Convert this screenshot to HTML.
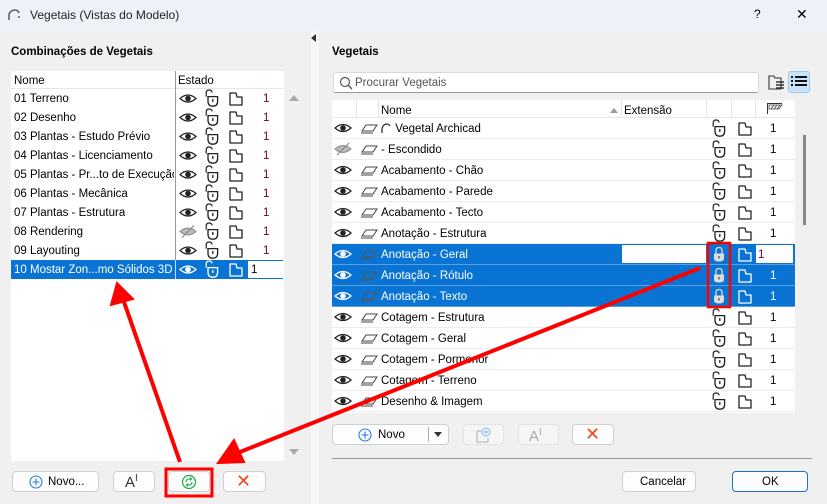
<!DOCTYPE html>
<html><head><meta charset="utf-8"><style>
*{margin:0;padding:0;box-sizing:border-box}
body{width:827px;height:504px;overflow:hidden;background:#f0f0f0;font-family:"Liberation Sans",sans-serif;font-size:11.5px;color:#000;position:relative}
.a{position:absolute}
.t{position:absolute;white-space:nowrap}
.btn{position:absolute;background:#fdfdfd;border:1px solid #d0d0d0;border-radius:4px}
.sel{background:#0a74d4;color:#fff}
svg{position:absolute;overflow:visible}
</style></head><body>
<svg width="0" height="0" style="position:absolute">
<defs>
<g id="eye"><path d="M-8 0 Q0 -7 8 0 Q0 7 -8 0Z" fill="none" stroke="currentColor" stroke-width="1.3"/><circle r="2.8" fill="currentColor"/></g>
<g id="eyeoff"><path d="M-8 0 Q0 -7 8 0 Q0 7 -8 0Z" fill="#bbb" stroke="#888" stroke-width="1"/><path d="M-6 6 L6 -6" stroke="#888" stroke-width="1.2"/></g>
<g id="lock" transform="scale(1.2)"><path d="M-4 -2 V-5 Q-4 -7.5 -1.5 -7.5 Q0.5 -7.5 1 -5.5" fill="none" stroke="currentColor" stroke-width="1"/><path d="M-2.5 -2 H5.5 V2 Q5.5 6 1.5 6 Q-2.5 6 -2.5 2Z" fill="none" stroke="currentColor" stroke-width="1.1"/><path d="M1.5 0 V2.5" stroke="currentColor" stroke-width="1.1"/></g>
<g id="lockc"><path d="M-3 -1 V-4 Q-3 -7 0 -7 Q3 -7 3 -4 V-1" fill="none" stroke="#ddd" stroke-width="1.3"/><path d="M-5 -1 H5 V4 Q5 7 0 7 Q-5 7 -5 4Z" fill="#ddd"/><path d="M0 1.5 V4" stroke="#555" stroke-width="1.3"/></g>
<g id="file"><path d="M-6 -6 H0 L1 -2 H6 V6 H-6Z" fill="none" stroke="currentColor" stroke-width="1.3" stroke-linejoin="round"/></g>
<g id="layer"><path d="M-7 3 L-3 -3 H8 L4 3Z M-8 5 H4" fill="none" stroke="currentColor" stroke-width="1"/></g>
</defs></svg>

<div class="a" style="left:0;top:0;width:827px;height:31px;background:#eef2f8"></div>
<svg style="left:8px;top:9px" width="12" height="12"><path d="M1 11 V5 Q3 1 7 1 Q10 1 11 4" fill="none" stroke="#444" stroke-width="1.3"/><path d="M11 7 V9" stroke="#444" stroke-width="1.3"/></svg>
<div class="t" style="left:30px;top:8px;font-size:12px;color:#222">Vegetais (Vistas do Modelo)</div>
<div class="t" style="left:754px;top:7px;font-size:12px">?</div>
<div class="t" style="left:796px;top:6px;font-size:14px">✕</div>

<div class="a" style="left:311px;top:31px;width:8px;height:473px;background:#f7f7f7"></div>
<div class="a" style="left:311px;top:34px;width:0;height:0;border-top:4px solid transparent;border-bottom:4px solid transparent;border-right:5px solid #333"></div>

<div class="t" style="left:11px;top:46px;font-weight:bold;font-size:11.5px">Combinações de Vegetais</div>
<div class="t" style="left:332px;top:46px;font-weight:bold;font-size:11.5px">Vegetais</div>

<div class="a" style="left:11px;top:71px;width:274px;height:390px;background:#fff"></div>
<div class="a" style="left:11px;top:71px;width:272px;height:18px;background:#fff;border-bottom:1px solid #e6e6e6"></div>
<div class="a" style="left:175px;top:71px;width:1px;height:208px;background:#999"></div>
<div class="t" style="left:14px;top:75px">Nome</div>
<div class="t" style="left:178px;top:75px">Estado</div>
<div class="a" style="left:284px;top:71px;width:17px;height:390px;background:#f0f0f0"></div>
<div class="a" style="left:289px;top:95px;border-left:5px solid transparent;border-right:5px solid transparent;border-bottom:6px solid #aaa"></div>
<div class="a" style="left:289px;top:449px;border-left:5px solid transparent;border-right:5px solid transparent;border-top:6px solid #aaa"></div>
<div id="lt"></div>

<div class="a" style="left:333px;top:72px;width:426px;height:21px;background:#fff;border:1px solid #d8d8d8;border-bottom:1px solid #999;border-radius:3px"></div>
<svg style="left:339px;top:76px" width="14" height="14"><circle cx="6" cy="6" r="4.5" fill="none" stroke="#555" stroke-width="1.2"/><path d="M9.5 9.5 L13 13" stroke="#555" stroke-width="1.3"/></svg>
<div class="t" style="left:355px;top:77px;color:#555">Procurar Vegetais</div>
<svg style="left:768px;top:74px" width="18" height="18"><path d="M1 2 H6 L7 4 H13 V15 H1Z" fill="none" stroke="#333" stroke-width="1.1"/><path d="M8 8 H16 M8 11 H16 M8 14 H16" stroke="#333" stroke-width="1.4"/></svg>
<div class="a" style="left:788px;top:71px;width:22px;height:22px;background:#cce4f7;border:1px solid #99c9ef;border-radius:3px"></div>
<svg style="left:791px;top:76px" width="16" height="12"><path d="M0 1 H2 M4 1 H16 M0 5 H2 M4 5 H16 M0 9 H2 M4 9 H16" stroke="#111" stroke-width="2"/></svg>

<div class="a" style="left:332px;top:100px;width:463px;height:313px;background:#fff"></div>
<div class="a" style="left:332px;top:100px;width:463px;height:18px;border-bottom:1px solid #e6e6e6"></div>
<div class="a" style="left:356px;top:100px;width:1px;height:18px;background:#e6e6e6"></div>
<div class="a" style="left:378px;top:100px;width:1px;height:18px;background:#e6e6e6"></div>
<div class="a" style="left:621px;top:100px;width:1px;height:18px;background:#e6e6e6"></div>
<div class="a" style="left:706px;top:100px;width:1px;height:18px;background:#e6e6e6"></div>
<div class="a" style="left:731px;top:100px;width:1px;height:18px;background:#e6e6e6"></div>
<div class="a" style="left:755px;top:100px;width:1px;height:18px;background:#e6e6e6"></div>
<div class="t" style="left:381px;top:105px">Nome</div>
<div class="a" style="left:610px;top:108px;border-left:4px solid transparent;border-right:4px solid transparent;border-bottom:5px solid #999"></div>
<div class="t" style="left:624px;top:105px">Extensão</div>
<svg style="left:767px;top:103px" width="16" height="12"><path d="M0.5 11 V0.5 H15" fill="none" stroke="#333"/><path d="M2 2 H15 L12 6 H2Z" fill="none" stroke="#444" stroke-width="0.8"/><path d="M4 6 L7 2 M7 6 L10 2 M10 6 L13 2" stroke="#444" stroke-width="0.8"/></svg>
<div class="a" style="left:795px;top:118px;width:17px;height:295px;background:#f0f0f0"></div>
<div class="a" style="left:803px;top:135px;width:3px;height:90px;background:#888"></div>
<div id="rt"></div>

<div class="btn" style="left:332px;top:424px;width:117px;height:21px"></div>
<svg style="left:358px;top:428px" width="14" height="14"><circle cx="7" cy="7" r="6" fill="none" stroke="#2a7ae2" stroke-width="1.1"/><path d="M7 3.5 V10.5 M3.5 7 H10.5" stroke="#2a7ae2" stroke-width="1.1"/></svg>
<div class="t" style="left:378px;top:429px">Novo</div>
<div class="a" style="left:428px;top:427px;width:1px;height:15px;background:#aaa"></div>
<div class="a" style="left:434px;top:432px;border-left:4px solid transparent;border-right:4px solid transparent;border-top:5px solid #333"></div>
<div class="btn" style="left:463px;top:424px;width:41px;height:21px;background:#f5f5f5;border-color:#e2e2e2"></div>
<svg style="left:476px;top:427px" width="16" height="16"><path d="M1 4 V15 H12 V11 M1 4 H5" fill="none" stroke="#aaa"/><circle cx="10" cy="5" r="4" fill="none" stroke="#8ab4ea"/><path d="M10 3 V7 M8 5 H12" stroke="#8ab4ea"/></svg>
<div class="btn" style="left:518px;top:424px;width:41px;height:21px;background:#f5f5f5;border-color:#e2e2e2"></div>
<div class="t" style="left:529px;top:427px;color:#aaa;font-size:15px">A<span style="font-size:10px;vertical-align:6px">I</span></div>
<div class="btn" style="left:572px;top:424px;width:42px;height:21px"></div>
<div class="t" style="left:585px;top:424px;color:#f04a1a;font-size:18px">✕</div>
<div class="a" style="left:332px;top:458px;width:480px;height:1px;background:#999"></div>
<div class="btn" style="left:622px;top:471px;width:74px;height:21px"></div>
<div class="t" style="left:640px;top:476px">Cancelar</div>
<div class="btn" style="left:732px;top:471px;width:76px;height:21px;border-color:#1f6fc5"></div>
<div class="t" style="left:762px;top:476px">OK</div>

<div class="btn" style="left:12px;top:471px;width:87px;height:21px"></div>
<svg style="left:29px;top:475px" width="14" height="14"><circle cx="7" cy="7" r="6" fill="none" stroke="#2a7ae2" stroke-width="1.1"/><path d="M7 3.5 V10.5 M3.5 7 H10.5" stroke="#2a7ae2" stroke-width="1.1"/></svg>
<div class="t" style="left:48px;top:476px">Novo...</div>
<div class="btn" style="left:113px;top:471px;width:42px;height:21px"></div>
<div class="t" style="left:125px;top:473px;font-size:15px;color:#333">A<span style="font-size:10px;vertical-align:6px">I</span></div>
<div class="btn" style="left:168px;top:471px;width:42px;height:21px"></div>
<svg style="left:181px;top:474px" width="16" height="16"><circle cx="8" cy="8" r="6.5" fill="none" stroke="#1aa84a" stroke-width="1.2"/><path d="M5 8 Q5 5 8 5 H10 M9 3.5 L10.5 5 L9 6.5 M11 8 Q11 11 8 11 H6 M7 9.5 L5.5 11 L7 12.5" fill="none" stroke="#1aa84a" stroke-width="1.1"/></svg>
<div class="btn" style="left:223px;top:471px;width:43px;height:21px"></div>
<div class="t" style="left:236px;top:471px;color:#f04a1a;font-size:18px">✕</div>

<svg style="left:0;top:0" width="827" height="504">
<rect x="166" y="469" width="46" height="27" fill="none" stroke="#f00" stroke-width="3"/>
<rect x="708" y="243" width="22" height="64" fill="none" stroke="#f00" stroke-width="2.5"/>
<path d="M180 462 L124 302" stroke="#f00" stroke-width="4"/>
<path d="M117 283 L111 305 L133 299Z" fill="#f00" stroke="#f00" stroke-width="2"/>
<path d="M700 268 L240 452" stroke="#f00" stroke-width="4"/>
<path d="M218 463 L234 440 L244 462Z" fill="#f00" stroke="#f00" stroke-width="2"/>
</svg>

<script>
var L=["01 Terreno","02 Desenho","03 Plantas - Estudo Prévio","04 Plantas - Licenciamento","05 Plantas - Pr...to de Execução","06 Plantas - Mecânica","07 Plantas - Estrutura","08 Rendering","09 Layouting","10 Mostar Zon...mo Sólidos 3D"];
var h="";
L.forEach(function(n,i){var y=89+i*19,s=i==9;
if(s)h+='<div class="a sel" style="left:11px;top:'+y+'px;width:272px;height:19px"></div><div class="a" style="left:175px;top:'+y+'px;width:1px;height:19px;background:#cde"></div>';
h+='<div class="t" style="left:14px;top:'+(y+4)+'px;color:'+(s?'#fff':'#000')+';max-width:160px;overflow:hidden">'+n+'</div>';
var c=s?'#fff':'#222';
h+='<svg style="left:180px;top:'+y+'px;color:'+c+'" width="100" height="19">'+(i==7?'<use href="#eyeoff" x="8" y="9.5"/>':'<use href="#eye" x="8" y="9.5"/>')+'<use href="#lock" x="31" y="10"/><use href="#file" x="56" y="10"/></svg>';
if(s)h+='<div class="a" style="left:248px;top:'+(y+1)+'px;width:35px;height:17px;background:#fff"></div><div class="t" style="left:251px;top:'+(y+4)+'px">1</div>';
else h+='<div class="t" style="left:263px;top:'+(y+4)+'px;color:#6a0030">1</div>';
});
document.getElementById('lt').innerHTML=h;
var R=["Vegetal Archicad","- Escondido","Acabamento - Chão","Acabamento - Parede","Acabamento - Tecto","Anotação - Estrutura","Anotação - Geral","Anotação - Rótulo","Anotação - Texto","Cotagem - Estrutura","Cotagem - Geral","Cotagem - Pormenor","Cotagem - Terreno","Desenho & Imagem"];
h="";
R.forEach(function(n,i){var y=118+i*21,s=(i>=6&&i<=8);
if(s)h+='<div class="a sel" style="left:332px;top:'+y+'px;width:463px;height:20px"></div>';
h+='<div class="a" style="left:332px;top:'+(y+20)+'px;width:463px;height:1px;background:'+(s?'#5a9fe0':'#ececec')+'"></div>';
var c=s?'#fff':'#222';
h+='<svg style="left:332px;top:'+y+'px;color:'+c+'" width="463" height="20">'+(i==1?'<use href="#eyeoff" x="11" y="10"/>':'<use href="#eye" x="11" y="10"/>')+'<g style="color:'+(s?'#555':'#444')+'"><use href="#layer" x="37" y="10"/></g>'+(s?'<use href="#lockc" x="387" y="10.5"/>':'<use href="#lock" x="386" y="11"/>')+'<use href="#file" x="413" y="11"/></svg>';
h+='<div class="t" style="left:381px;top:'+(y+5)+'px;color:'+(s?'#fff':'#000')+'">'+(i==0?'<svg style="position:relative;display:inline-block;width:11px;height:10px;vertical-align:-1px" width="11" height="10"><path d="M1 10 V6 Q2 1 6 1 Q8 1 9 3" fill="none" stroke="#333" stroke-width="1.3"/></svg> ':'')+n+'</div>';
if(i==6)h+='<div class="a" style="left:622px;top:'+(y+1)+'px;width:84px;height:18px;background:#fff"></div><div class="a" style="left:756px;top:'+(y+1)+'px;width:37px;height:18px;background:#fff"></div><div class="t" style="left:758px;top:'+(y+5)+'px;color:#4a0060">1</div>';
else h+='<div class="t" style="left:770px;top:'+(y+5)+'px;color:'+(s?'#fff':'#000')+'">1</div>';
});
document.getElementById('rt').innerHTML=h;
</script>
</body></html>
